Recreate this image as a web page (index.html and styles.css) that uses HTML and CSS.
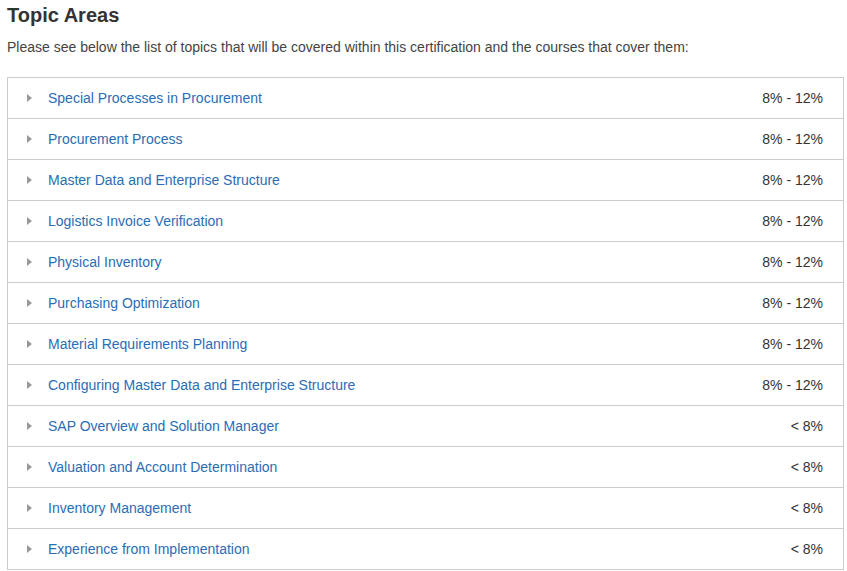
FILE: index.html
```html
<!DOCTYPE html>
<html>
<head>
<meta charset="utf-8">
<link rel="stylesheet" href="styles.css">
</head>
<body>
<div class="page">
  <h2 class="title">Topic Areas</h2>
  <p class="intro">Please see below the list of topics that will be covered within this certification and the courses that cover them:</p>
  <ul class="topics">
    <li class="row"><span class="caret"></span><a class="name" href="#">Special Processes in Procurement</a><span class="pct">8% - 12%</span></li>
    <li class="row"><span class="caret"></span><a class="name" href="#">Procurement Process</a><span class="pct">8% - 12%</span></li>
    <li class="row"><span class="caret"></span><a class="name" href="#">Master Data and Enterprise Structure</a><span class="pct">8% - 12%</span></li>
    <li class="row"><span class="caret"></span><a class="name" href="#">Logistics Invoice Verification</a><span class="pct">8% - 12%</span></li>
    <li class="row"><span class="caret"></span><a class="name" href="#">Physical Inventory</a><span class="pct">8% - 12%</span></li>
    <li class="row"><span class="caret"></span><a class="name" href="#">Purchasing Optimization</a><span class="pct">8% - 12%</span></li>
    <li class="row"><span class="caret"></span><a class="name" href="#">Material Requirements Planning</a><span class="pct">8% - 12%</span></li>
    <li class="row"><span class="caret"></span><a class="name" href="#">Configuring Master Data and Enterprise Structure</a><span class="pct">8% - 12%</span></li>
    <li class="row"><span class="caret"></span><a class="name" href="#">SAP Overview and Solution Manager</a><span class="pct">&lt; 8%</span></li>
    <li class="row"><span class="caret"></span><a class="name" href="#">Valuation and Account Determination</a><span class="pct">&lt; 8%</span></li>
    <li class="row"><span class="caret"></span><a class="name" href="#">Inventory Management</a><span class="pct">&lt; 8%</span></li>
    <li class="row"><span class="caret"></span><a class="name" href="#">Experience from Implementation</a><span class="pct">&lt; 8%</span></li>
  </ul>
</div>
</body>
</html>
```
FILE: styles.css
```css
html, body {
  margin: 0;
  padding: 0;
  background: #fff;
}
body {
  font-family: "Liberation Sans", Arial, sans-serif;
  color: #333;
}
.page {
  padding: 3px 3px 0 7px;
}
.title {
  margin: 0;
  font-size: 20px;
  line-height: 24px;
  font-weight: bold;
  color: #333;
}
.intro {
  margin: 11px 0 0 0;
  font-size: 14px;
  line-height: 18px;
  color: #444;
}
.topics {
  list-style: none;
  margin: 21px 0 0 0;
  padding: 0;
  width: 835px;
  border: 1px solid #ccc;
}
.row {
  display: flex;
  align-items: center;
  height: 40px;
  border-top: 1px solid #ccc;
  padding: 0 20px 0 19px;
  font-size: 14px;
}
.row:first-child {
  border-top: none;
}
.caret {
  width: 0;
  height: 0;
  border-top: 4px solid transparent;
  border-bottom: 4px solid transparent;
  border-left: 5px solid #999;
  margin-right: 16px;
}
.name {
  flex: 1;
  color: #2a6db5;
  text-decoration: none;
}
.pct {
  color: #333;
}
```
